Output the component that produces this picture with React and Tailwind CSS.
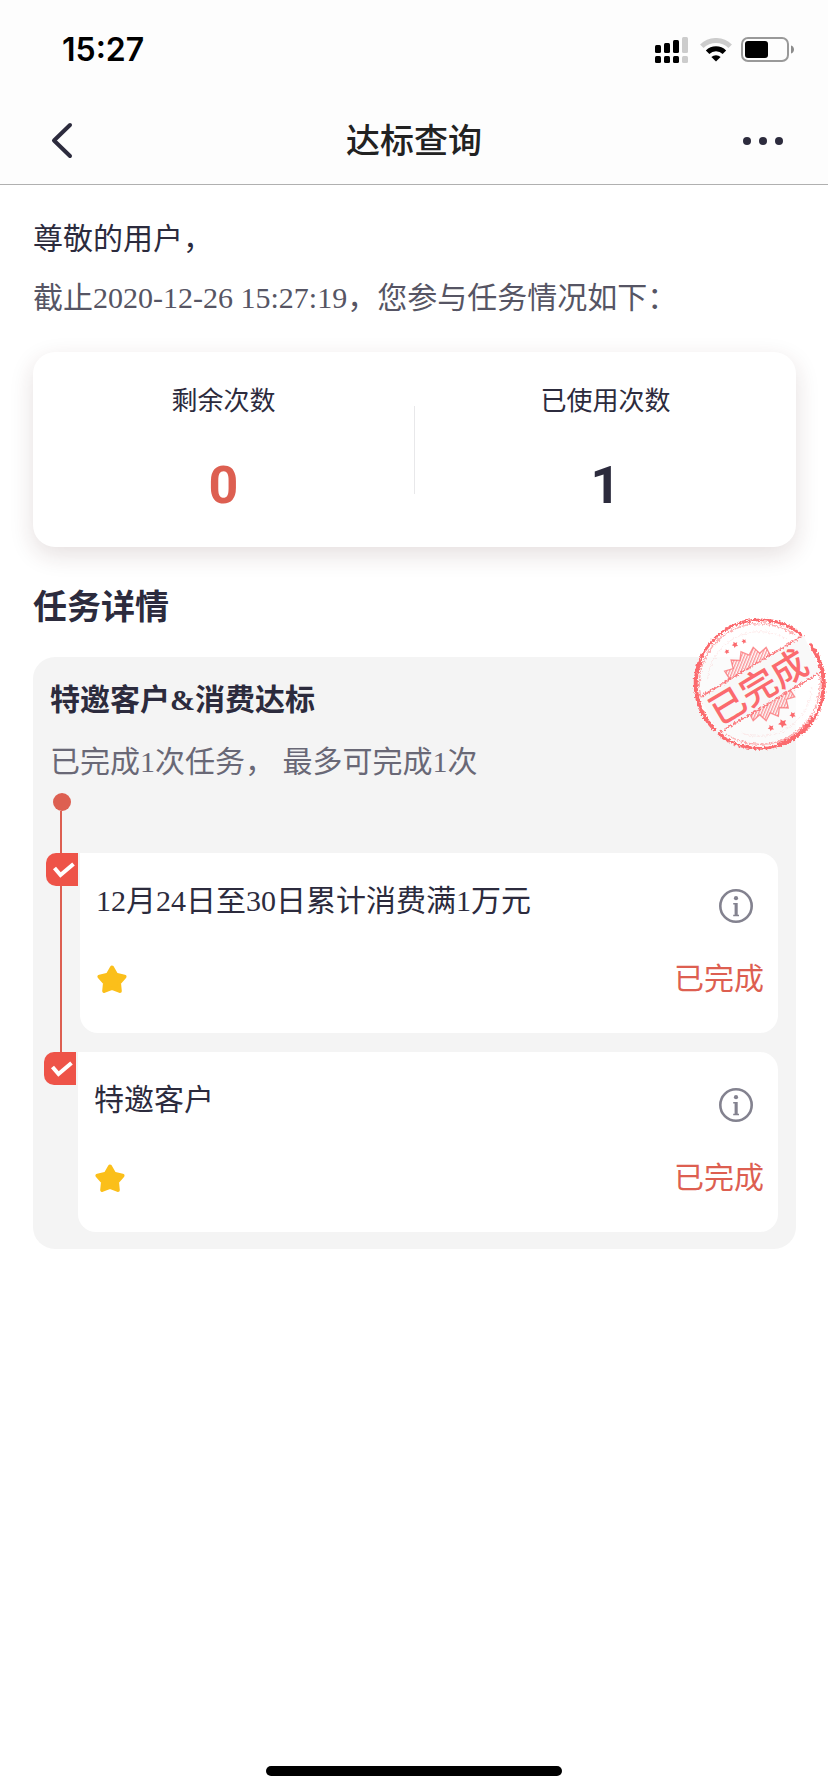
import React from "react";

const tasks = [
  {
    id: 1,
    title: "12月24日至30日累计消费满1万元",
    status: "已完成",
    indent: "pl-[13px]",
  },
  {
    id: 2,
    title: "特邀客户",
    status: "已完成",
    indent: "pl-[11px]",
  },
];

const summary = [
  { label: "剩余次数", value: 0, color: "text-[#dd5f51]" },
  { label: "已使用次数", value: 1, color: "text-[#2c2b3d]" },
];

const SignalIcon = () => (
  <svg width="33" height="26" viewBox="0 0 33 26" fill="#000" aria-hidden="true">
    <rect x="0" y="8" width="6" height="8" rx="1.5" />
    <rect x="9" y="6" width="6" height="10" rx="1.5" />
    <rect x="18" y="3" width="6" height="13" rx="1.5" />
    <rect x="27" y="0" width="6" height="16" rx="1.5" fill="#ccc" />
    <rect x="0" y="19" width="6" height="7" rx="1.5" />
    <rect x="9" y="19" width="6" height="7" rx="1.5" />
    <rect x="18" y="19" width="6" height="7" rx="1.5" />
    <rect x="27" y="19" width="6" height="7" rx="1.5" fill="#ccc" />
  </svg>
);

const WifiIcon = () => (
  <svg width="32" height="24" viewBox="0 0 32 24" fill="none" aria-hidden="true">
    <path d="M1.8 8.2 A20.5 20.5 0 0 1 30.2 8.2" stroke="#ccc" strokeWidth="5" />
    <path d="M7.6 14.3 A12 12 0 0 1 24.4 14.3" stroke="#000" strokeWidth="5" />
    <path d="M11.4 19 A6.6 6.6 0 0 1 20.6 19 L16 23.6 Z" fill="#000" />
  </svg>
);

const BatteryIcon = () => (
  <svg width="54" height="26" viewBox="0 0 54 26" fill="none" aria-hidden="true">
    <rect x="1" y="1" width="46" height="23" rx="6" stroke="#999" strokeWidth="2" />
    <rect x="4" y="4" width="23" height="17" rx="3" fill="#000" />
    <path d="M50 8.5 C54 9.5 54 15.5 50 16.5 Z" fill="#8c8c8c" />
  </svg>
);

const StarIcon = () => (
  <svg width="31" height="29" viewBox="0 0 31 29" aria-hidden="true">
    <path
      d="M16 2.5 L20 9.6 L28.5 11.6 L23 18 L23.8 26 L16 23 L8.2 26 L9 18 L3.5 11.6 L12 9.6 Z"
      fill="#fbbf1a"
      stroke="#fbbf1a"
      strokeWidth="4"
      strokeLinejoin="round"
    />
  </svg>
);

const InfoIcon = () => (
  <svg width="34" height="34" viewBox="0 0 34 34" aria-hidden="true">
    <circle cx="17" cy="17" r="15.7" fill="none" stroke="#83828f" strokeWidth="2.6" />
    <circle cx="17" cy="9.2" r="2.1" fill="#83828f" />
    <path d="M14.2 14 H18.7 V25.8 H20 V27.2 H14.2 V25.8 H15.6 V15.4 H14.2 Z" fill="#83828f" />
  </svg>
);

const CheckBadge = () => (
  <svg width="32" height="33" viewBox="0 0 32 33" aria-hidden="true">
    <path d="M32 0 V33 H10 A10 10 0 0 1 0 23 V10 A10 10 0 0 1 10 0 Z" fill="#ee5348" />
    <path d="M8.5 15 L14.5 22 L27.5 11" fill="none" stroke="#fff" strokeWidth="4" />
  </svg>
);

// stamp geometry, drawn around one centre
const CX = 239;
const CY = 252;

const point = (r, deg) => {
  const a = (deg * Math.PI) / 180;
  return `${(CX + r * Math.cos(a)).toFixed(1)} ${(CY + r * Math.sin(a)).toFixed(1)}`;
};

const arc = (r, from, to) =>
  `M${point(r, from)} A${r} ${r} 0 ${to - from > 180 ? 1 : 0} 1 ${point(r, to)}`;

const star = (cx, cy, r) =>
  Array.from({ length: 10 }, (_, i) => {
    const radius = i % 2 ? r * 0.5 : r;
    const a = (i * Math.PI) / 5 - Math.PI / 2 - 0.5;
    return `${cx + radius * Math.cos(a)},${cy + radius * Math.sin(a)}`;
  }).join(" ");

const burst = Array.from({ length: 36 }, (_, i) => point(i % 2 ? 92 : 112, i * 10)).join(" ");

const Stamp = () => (
  <svg width="148" height="160" viewBox="0 0 444 480" role="img" aria-label="已完成">
    <defs>
      <filter id="rough" x="-5%" y="-5%" width="110%" height="110%">
        <feTurbulence type="fractalNoise" baseFrequency="0.15" numOctaves="3" seed="4" />
        <feDisplacementMap
          in="SourceGraphic"
          scale="14"
          xChannelSelector="R"
          yChannelSelector="G"
        />
      </filter>
      <pattern id="hatch" width="8" height="8" patternUnits="userSpaceOnUse" patternTransform="rotate(22)">
        <rect width="4" height="8" fill="#fb6a6e" fillOpacity="0.7" />
      </pattern>
      <clipPath id="above">
        <path d="M0 328 L444 60 V0 H0 Z" />
      </clipPath>
      <clipPath id="below">
        <path d="M0 469 L444 204 V480 H0 Z" />
      </clipPath>
    </defs>
    <circle cx={CX} cy={CY} r="190" fill="#fff" opacity="0.65" />
    <path d="M62 292 L370 106 L424 215 L115 400 Z" fill="#f7f7f7" opacity="0.7" />
    <g filter="url(#rough)" fill="none" stroke="#fb6a6e">
      {/* outer ring, open where the band runs through it */}
      <path d={arc(193, 134, 312)} strokeWidth="8" />
      <path d={arc(193, -39, 130)} strokeWidth="8" />
      {/* spots where the ink is heavier */}
      <path d={arc(192, 134, 200)} strokeWidth="12" />
      <path d={arc(192, -38, 12)} strokeWidth="12" />
      <path d={arc(191, 32, 74)} strokeWidth="14" />
      <path d={arc(181, 168, 306)} strokeWidth="4" opacity="0.55" />
      <path d={arc(181, -10, 124)} strokeWidth="4" opacity="0.55" />
      <path d={arc(157, 184, 300)} strokeWidth="2" opacity="0.2" />
      <path d={arc(157, 4, 110)} strokeWidth="2" opacity="0.2" />
      <path d="M60 292 L370 106" strokeWidth="5" opacity="0.85" />
      <path d="M115 400 L424 215" strokeWidth="5" opacity="0.85" />
    </g>
    <g fill="url(#hatch)" stroke="#fb6a6e" strokeWidth="4" strokeOpacity="0.7">
      <polygon points={burst} clipPath="url(#above)" />
      <polygon points={burst} clipPath="url(#below)" />
    </g>
    <g fill="#fb6a6e">
      <polygon points={star(141, 155, 8)} />
      <polygon points={star(165, 134, 10)} />
      <polygon points={star(192, 124, 8)} />
      <polygon points={star(273, 384, 10)} />
      <polygon points={star(308, 370, 14)} />
      <polygon points={star(338, 345, 10)} />
    </g>
    <text
      x="236"
      y="300"
      transform="rotate(-31 236 262)"
      textAnchor="middle"
      fontSize="108"
      fill="#fb6a6e"
      className="font-['Noto_Sans_CJK_SC',sans-serif] font-medium"
    >
      已完成
    </text>
  </svg>
);

const StatusBar = () => (
  <div className="flex items-center justify-between h-[100px] pl-[62px] pr-[33px]">
    <span className="font-['Inter',sans-serif] text-[32px] font-semibold text-black">15:27</span>
    <div className="flex items-center">
      <SignalIcon />
      <div className="ml-3">
        <WifiIcon />
      </div>
      <div className="ml-[9px]">
        <BatteryIcon />
      </div>
    </div>
  </div>
);

const NavBar = () => (
  <div className="flex items-center justify-between h-[84px] px-[41px] pb-[3px]">
    <button type="button" aria-label="返回" className="w-12 pl-[9px]">
      <svg width="24" height="38" viewBox="0 0 24 38" aria-hidden="true">
        <path
          d="M20 3 L4 18.5 L20 34"
          fill="none"
          stroke="#2c2b3d"
          strokeWidth="4"
          strokeLinecap="round"
          strokeLinejoin="round"
        />
      </svg>
    </button>
    <h1 className="pt-[3px] text-[34px] leading-[40px] font-medium text-[#222]">达标查询</h1>
    <button type="button" aria-label="更多" className="w-12">
      <svg width="48" height="10" viewBox="0 0 48 10" fill="#2c2b3d" aria-hidden="true">
        <circle cx="8" cy="5" r="4" />
        <circle cx="24" cy="5" r="4" />
        <circle cx="40" cy="5" r="4" />
      </svg>
    </button>
  </div>
);

const TaskItem = ({ task, isLast }) => (
  <li className={`flex pr-[18px] ${task.indent}`}>
    <div className="flex flex-col w-[34px] shrink-0">
      <CheckBadge />
      {!isLast && <div className="flex-1 w-[2px] ml-[14px] bg-[#dd5f51]"></div>}
    </div>
    <div className={isLast ? "flex-1" : "flex-1 pb-[19px]"}>
      <div className="bg-white rounded-[18px] rounded-tl-none pl-4 pr-[14px] pt-[17px] pb-[23px]">
        <div className="flex justify-between">
          <h4 className="text-[30px] leading-[62px] text-[#2c2b3d]">{task.title}</h4>
          <button type="button" aria-label="任务说明" className="self-end mb-[9px] mr-[11px]">
            <InfoIcon />
          </button>
        </div>
        <div className="flex items-center justify-between mt-4">
          <StarIcon />
          <span className="text-[30px] leading-[62px] text-[#dd5f51]">{task.status}</span>
        </div>
      </div>
    </div>
  </li>
);

const App = () => {
  return (
    <div className="min-h-screen flex flex-col bg-white font-['Liberation_Serif','Noto_Sans_CJK_SC',serif]">
      <header className="bg-[#fdfdfd] border-b border-[#b0b0b0]">
        <StatusBar />
        <NavBar />
      </header>

      <main className="flex-1 pl-[33px] pr-8 pt-6">
        <p className="text-[30px] leading-[59px] text-[#2c2b3d]">尊敬的用户，</p>
        <p className="text-[30px] leading-[59px] text-[#565564]">
          截止2020-12-26 15:27:19，您参与任务情况如下：
        </p>

        {/* Summary */}
        <section className="flex items-center mt-[25px] rounded-[22px] bg-white shadow-[0_8px_24px_rgba(70,30,30,0.14)]">
          {summary.map((item, index) => (
            <React.Fragment key={item.label}>
              {index > 0 && <div className="w-px h-[88px] bg-[#e8e8ea]"></div>}
              <div className="flex-1 text-center pt-[30px] pb-[25px]">
                <p className="text-[26px] leading-[40px] text-[#2c2b3d]">{item.label}</p>
                <p
                  className={`mt-7 font-['Roboto',sans-serif] text-[52px] leading-[72px] font-bold ${item.color}`}
                >
                  {item.value}
                </p>
              </div>
            </React.Fragment>
          ))}
        </section>

        {/* Task details */}
        <h2 className="mt-[30px] mb-[18px] text-[34px] leading-[62px] font-bold text-[#2c2b3d]">任务详情</h2>
        <section className="relative rounded-[22px] bg-[#f4f4f4] pt-3 pb-[17px]">
          <div className="absolute -top-[57px] -right-8">
            <Stamp />
          </div>
          <h3 className="pl-[17px] text-[30px] leading-[62px] font-bold text-[#2c2b3d]">特邀客户&amp;消费达标</h3>
          <p className="pl-[17px] text-[30px] leading-[62px] text-[#696876]">已完成1次任务， 最多可完成1次</p>
          <div className="pl-5">
            <div className="w-[18px] h-[18px] rounded-full bg-[#dd5f51]"></div>
            <div className="w-[2px] h-[42px] ml-[7px] bg-[#dd5f51]"></div>
          </div>
          <ol>
            {tasks.map((task, index) => (
              <TaskItem key={task.id} task={task} isLast={index === tasks.length - 1} />
            ))}
          </ol>
        </section>
      </main>

      <div className="flex justify-center pb-4">
        <div className="w-[296px] h-[10px] rounded-full bg-black"></div>
      </div>
    </div>
  );
};

export default App;
